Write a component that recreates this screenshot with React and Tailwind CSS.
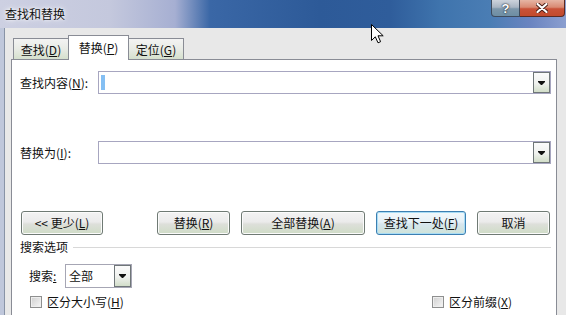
import React from "react";

function Arrow() {
  return (
    <svg width="7" height="4" viewBox="0 0 7 4">
      <path d="M0 0H7V1L4 4H3L0 1Z" fill="#111" />
    </svg>
  );
}

function DropBtn({ className }) {
  return (
    <div
      className={
        "flex items-center justify-center border border-[#6f7678] bg-[linear-gradient(#fbfbfb,#eff1ee_55%,#d2dec9)] " +
        className
      }
    >
      <Arrow />
    </div>
  );
}

function Btn({ children, className, focus }) {
  return (
    <div
      className={
        "h-[24px] flex items-center justify-center rounded-[3px] border text-[12px] leading-none " +
        (focus
          ? "border-[#3c7fb1] shadow-[inset_0_0_0_1px_#a8dcf5] bg-[linear-gradient(#f2f8fb,#e6f1f7_45%,#d7e6ee_55%,#cfe3d8)] "
          : "border-[#6f7a74] shadow-[inset_0_0_0_1px_#fbfbfb] bg-[linear-gradient(#f3f3f3,#ebebeb_45%,#dddfda_55%,#cfdcc6)] ") +
        className
      }
    >
      {children}
    </div>
  );
}

function Check() {
  return (
    <div className="w-[12px] h-[12px] border border-[#8e8f8f] bg-[linear-gradient(135deg,#cfcfcf,#f6f6f6)] shadow-[inset_0_0_0_1px_#eeeeee]" />
  );
}

export default function App() {
  return (
    <div className="w-[566px] h-[315px] overflow-hidden relative flex flex-col bg-[#e8e8e8] text-[#111] font-['Noto_Sans_CJK_SC',sans-serif]">
      {/* title bar */}
      <div className="h-[28px] flex justify-between items-start bg-[linear-gradient(90deg,#cdd0e2_0px,#c4c8dd_110px,#a6afd2_175px,#3a67a6_210px,#2d5a98_320px,#2f5d9b_390px,#3f74ad_440px,#4a7db4_490px,#6a84c0_530px,#8b9fd0_566px)]">
        <div className="h-[28px] pl-[5px] flex items-center text-[12px] leading-none [text-shadow:0_0_6px_#ffffff,0_0_3px_#ffffff]">
          查找和替换
        </div>
        <div className="flex mr-[1px]">
          <div className="w-[29px] h-[17px] border border-t-0 border-[#3f4c5e] rounded-bl-[4px] bg-[linear-gradient(#cdd3dc,#a9b5c3_45%,#7d97ab_55%,#6d8ea4)] flex items-center justify-center text-white font-bold text-[13px] leading-none [text-shadow:0_0_2px_#1c2430,0_0_1px_#1c2430] font-['Liberation_Sans',sans-serif]">
            ?
          </div>
          <div className="w-[45px] h-[17px] border border-t-0 border-l-0 border-[#5b2a22] rounded-br-[4px] bg-[linear-gradient(#e6b5a4,#d98a73_45%,#c95238_55%,#c24a2c)] flex items-center justify-center">
            <svg width="12" height="10" viewBox="0 0 12 10">
              <path d="M1.5 1L10.5 9M10.5 1L1.5 9" stroke="#4a1e16" strokeWidth="4" strokeLinecap="round" />
              <path d="M1.5 1L10.5 9M10.5 1L1.5 9" stroke="#ffffff" strokeWidth="2.2" strokeLinecap="round" />
            </svg>
          </div>
        </div>
      </div>
      <div className="h-px bg-[#1a3763]" />

      {/* body */}
      <div className="flex-1 flex">
        <div className="w-[4px] bg-[#bfc7db]" />
        <div className="flex-1 border-l border-[#8893a6] pl-[6px] flex flex-col">
          {/* tabs */}
          <div className="h-[31px] pt-[7px] pl-[2px] flex items-end">
            <div className="w-[56px] h-[21px] border border-b-0 border-[#898c95] bg-[linear-gradient(#f3f3f3,#e8ebe5_50%,#d5e0cd)] flex items-center justify-center text-[12px] leading-none pt-[1px]">
              查找(<u>D</u>)
            </div>
            <div className="-ml-px relative z-10 -mb-px w-[61px] h-[25px] border border-b-0 border-[#898c95] bg-white flex items-center justify-center text-[12px] leading-none pb-[1px]">
              替换(<u>P</u>)
            </div>
            <div className="-ml-px w-[56px] h-[21px] border border-b-0 border-[#898c95] bg-[linear-gradient(#f3f3f3,#e8ebe5_50%,#d5e0cd)] flex items-center justify-center text-[12px] leading-none pt-[1px]">
              定位(<u>G</u>)
            </div>
          </div>

          {/* panel */}
          <div className="w-[546px] h-[300px] shrink-0 border border-[#898c95] bg-white flex flex-col text-[12px] leading-none">
            {/* find row */}
            <div className="mt-[11px] h-[23px] pl-[8px] pr-[5px] flex items-center">
              <div className="w-[78px]">
                查找内容(<u>N</u>):
              </div>
              <div className="flex-1 h-[23px] border border-[#a7a6c0] flex">
                <div className="flex-1 flex items-center pl-[2px]">
                  <div className="w-[4px] h-[15px] bg-[#84bff3]" />
                </div>
                <DropBtn className="w-[17px] h-[21px]" />
              </div>
            </div>

            {/* replace row */}
            <div className="mt-[47px] h-[23px] pl-[8px] pr-[5px] flex items-center">
              <div className="w-[78px]">
                替换为(<u>I</u>):
              </div>
              <div className="flex-1 h-[23px] border border-[#a7a6c0] flex">
                <div className="flex-1" />
                <DropBtn className="w-[17px] h-[21px]" />
              </div>
            </div>

            {/* buttons */}
            <div className="mt-[47px] pl-[9px] flex">
              <Btn className="w-[82px]">&lt;&lt; 更少(<u>L</u>)</Btn>
              <Btn className="w-[73px] ml-[54px]">替换(<u>R</u>)</Btn>
              <Btn className="w-[124px] ml-[11px]">全部替换(<u>A</u>)</Btn>
              <Btn className="w-[90px] ml-[11px]" focus>
                查找下一处(<u>F</u>)
              </Btn>
              <Btn className="w-[73px] ml-[11px]">取消</Btn>
            </div>

            {/* search options header */}
            <div className="mt-[5px] h-[14px] pl-[8px] pr-[5px] flex items-center">
              <span>搜索选项</span>
              <div className="flex-1 ml-[5px] h-px bg-[#d8d8d8]" />
            </div>

            {/* search select */}
            <div className="mt-[10px] h-[24px] pl-[17px] flex items-center">
              <div className="w-[36px]">
                搜索<u>:</u>
              </div>
              <div className="w-[67px] h-[24px] border border-[#a6a6b4] flex">
                <div className="flex-1 flex items-center pl-[3px]">全部</div>
                <DropBtn className="w-[17px] h-[22px]" />
              </div>
            </div>

            {/* checkboxes */}
            <div className="mt-[8px] h-[12px] pl-[18px] flex items-center">
              <div className="w-[402px] flex items-center">
                <Check />
                <span className="ml-[5px]">
                  区分大小写(<u>H</u>)
                </span>
              </div>
              <div className="flex items-center">
                <Check />
                <span className="ml-[5px]">
                  区分前缀(<u>X</u>)
                </span>
              </div>
            </div>
          </div>
        </div>
      </div>

      {/* mouse cursor */}
      <svg className="absolute left-[371px] top-[24px]" width="13" height="20" viewBox="0 0 13 20">
        <path d="M0.5 0.5V16.5L4.3 12.8L7 18.8L9.6 17.7L7 11.8H12.2Z" fill="#fff" stroke="#000" strokeWidth="1" strokeLinejoin="round" />
      </svg>
    </div>
  );
}
